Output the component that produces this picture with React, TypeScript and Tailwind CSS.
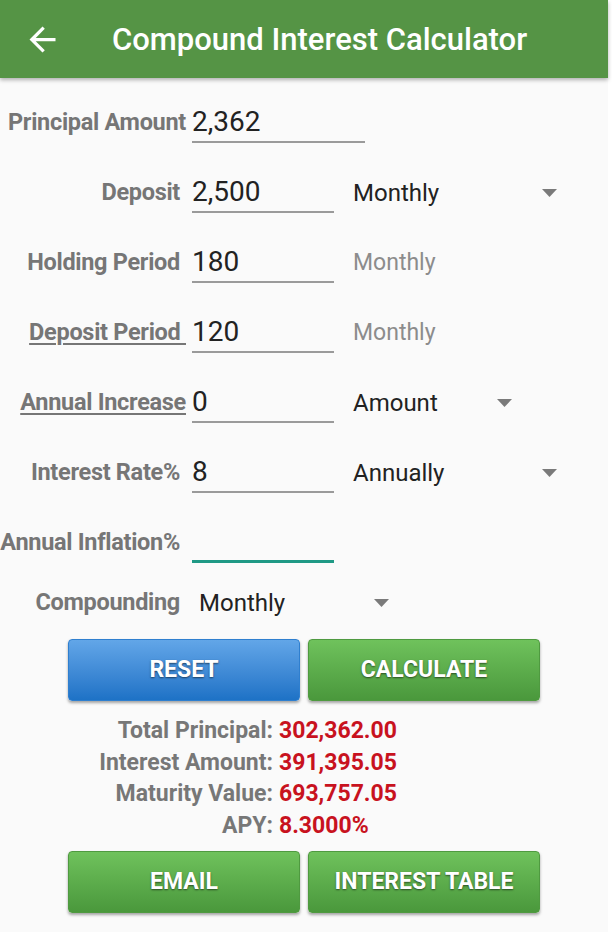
import React from "react";

const Tri = ({ className = "" }: { className?: string }) => (
  <svg width="15" height="8" viewBox="0 0 15 8" className={className}>
    <polygon points="0,0 15,0 7.5,8" fill="#7a7a7a" />
  </svg>
);

const Label = ({
  children,
  pr = "pr-0",
  underline = false,
}: {
  children: React.ReactNode;
  pr?: string;
  underline?: boolean;
}) => (
  <div className={`w-[186px] shrink-0 text-right ${pr}`}>
    <span
      className={`text-[23.5px] font-bold tracking-[-0.3px] text-[#767676] whitespace-nowrap ${
        underline ? "underline decoration-[2px] underline-offset-[3px]" : ""
      }`}
    >
      {children}
    </span>
  </div>
);

const Field = ({
  value,
  w = "w-[142px]",
  active = false,
}: {
  value: string;
  w?: string;
  active?: boolean;
}) => (
  <div
    className={`${w} ml-[6px] h-[40px] shrink-0 ${
      active ? "border-b-[3px] border-[#1f9985]" : "border-b-[2px] border-[#9a9a9a]"
    }`}
  >
    <span className="block leading-[38px] text-[28px] text-[#222]">{value}</span>
  </div>
);

const Spinner = ({ value, w }: { value: string; w: string }) => (
  <div className={`${w} flex items-center justify-between ml-[19px]`}>
    <span className="text-[24px] text-[#222] leading-[30px]">{value}</span>
    <Tri />
  </div>
);

const Row = ({ children }: { children: React.ReactNode }) => (
  <div className="h-[70px] flex items-center">{children}</div>
);

const Btn = ({
  children,
  blue = false,
}: {
  children: React.ReactNode;
  blue?: boolean;
}) => (
  <div
    className={`w-[232px] h-[62px] rounded-[4px] flex items-center justify-center text-white font-bold text-[23px] [text-shadow:0_1px_2px_rgba(0,0,0,0.55)] shadow-[0_2px_3px_rgba(0,0,0,0.35)] ${
      blue
        ? "bg-gradient-to-b from-[#62a6e8] to-[#1d72c6] border border-[#2f7fcf]"
        : "bg-gradient-to-b from-[#6fc25c] to-[#4a983c] border border-[#4f9a40]"
    }`}
  >
    {children}
  </div>
);

export default function App() {
  return (
    <div
      className="w-[612px] h-[932px] bg-white overflow-hidden"
      style={{ fontFamily: "Roboto, 'Noto Sans', sans-serif" }}
    >
      <div className="w-[608px] h-[932px] bg-[#fafafa]">
        <div className="h-[78px] bg-[#559445] flex items-center shadow-[0_2px_4px_rgba(0,0,0,0.3)] relative z-10">
          <svg width="39" height="39" viewBox="0 0 24 24" className="ml-[23px]">
            <path
              d="M20 11H7.83l5.59-5.59L12 4l-8 8 8 8 1.41-1.41L7.83 13H20v-2z"
              fill="#fff"
            />
          </svg>
          <span className="ml-[50px] text-white text-[31px] font-medium leading-none">
            Compound Interest Calculator
          </span>
        </div>

        <div className="pt-[10px]">
          <Row>
            <Label>Principal Amount</Label>
            <Field value="2,362" w="w-[173px]" />
          </Row>
          <Row>
            <Label pr="pr-[6px]">Deposit</Label>
            <Field value="2,500" />
            <Spinner value="Monthly" w="w-[204px]" />
          </Row>
          <Row>
            <Label pr="pr-[6px]">Holding Period</Label>
            <Field value="180" />
            <span className="ml-[19px] text-[23px] text-[#8c8c8c]">Monthly</span>
          </Row>
          <Row>
            <Label underline>{"Deposit Period\u00a0"}</Label>
            <Field value="120" />
            <span className="ml-[19px] text-[23px] text-[#8c8c8c]">Monthly</span>
          </Row>
          <Row>
            <Label underline>Annual Increase</Label>
            <Field value="0" />
            <Spinner value="Amount" w="w-[159px]" />
          </Row>
          <Row>
            <Label pr="pr-[6px]">Interest Rate%</Label>
            <Field value="8" />
            <Spinner value="Annually" w="w-[204px]" />
          </Row>
          <Row>
            <Label pr="pr-[6px]">Annual Inflation%</Label>
            <Field value="" active />
          </Row>
          <div className="h-[50px] flex items-center">
            <Label pr="pr-[6px]">Compounding</Label>
            <div className="ml-[13px] w-[190px] flex items-center justify-between">
              <span className="text-[24px] text-[#222]">Monthly</span>
              <Tri />
            </div>
          </div>

          <div className="mt-[11px] flex gap-[8px] pl-[68px]">
            <Btn blue>RESET</Btn>
            <Btn>CALCULATE</Btn>
          </div>

          <div className="mt-[14px] flex flex-col text-[23px] font-bold leading-[31.5px]">
            {[
              ["Total Principal:", "302,362.00"],
              ["Interest Amount:", "391,395.05"],
              ["Maturity Value:", "693,757.05"],
              ["APY:", "8.3000%"],
            ].map(([l, v]) => (
              <div key={l} className="flex">
                <span className="w-[273px] text-right text-[#777]">{l}</span>
                <span className="ml-[6px] text-[#c8121e]">{v}</span>
              </div>
            ))}
          </div>

          <div className="mt-[10px] flex gap-[8px] pl-[68px]">
            <Btn>EMAIL</Btn>
            <Btn>INTEREST TABLE</Btn>
          </div>
        </div>
      </div>
    </div>
  );
}
